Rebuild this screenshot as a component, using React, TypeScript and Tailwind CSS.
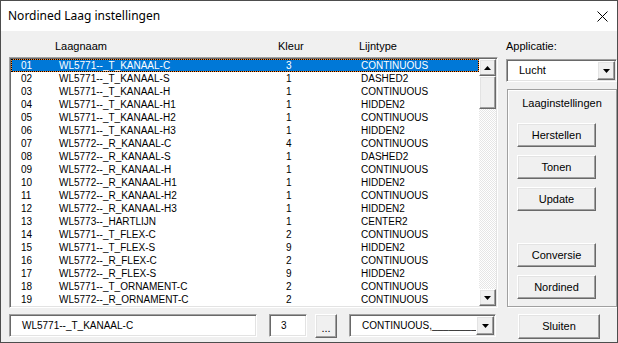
import React from "react";

const rows: [string, string, string, string][] = [
  ["01", "WL5771--_T_KANAAL-C", "3", "CONTINUOUS"],
  ["02", "WL5771--_T_KANAAL-S", "1", "DASHED2"],
  ["03", "WL5771--_T_KANAAL-H", "1", "CONTINUOUS"],
  ["04", "WL5771--_T_KANAAL-H1", "1", "HIDDEN2"],
  ["05", "WL5771--_T_KANAAL-H2", "1", "CONTINUOUS"],
  ["06", "WL5771--_T_KANAAL-H3", "1", "HIDDEN2"],
  ["07", "WL5772--_R_KANAAL-C", "4", "CONTINUOUS"],
  ["08", "WL5772--_R_KANAAL-S", "1", "DASHED2"],
  ["09", "WL5772--_R_KANAAL-H", "1", "CONTINUOUS"],
  ["10", "WL5772--_R_KANAAL-H1", "1", "HIDDEN2"],
  ["11", "WL5772--_R_KANAAL-H2", "1", "CONTINUOUS"],
  ["12", "WL5772--_R_KANAAL-H3", "1", "HIDDEN2"],
  ["13", "WL5773--_HARTLIJN", "1", "CENTER2"],
  ["14", "WL5771--_T_FLEX-C", "2", "CONTINUOUS"],
  ["15", "WL5771--_T_FLEX-S", "9", "HIDDEN2"],
  ["16", "WL5772--_R_FLEX-C", "2", "CONTINUOUS"],
  ["17", "WL5772--_R_FLEX-S", "9", "HIDDEN2"],
  ["18", "WL5771--_T_ORNAMENT-C", "2", "CONTINUOUS"],
  ["19", "WL5772--_R_ORNAMENT-C", "2", "CONTINUOUS"],
];

const raised =
  "bg-[#f0f0f0] border border-t-white border-l-white border-r-[#696969] border-b-[#696969] shadow-[inset_-1px_-1px_0_#a0a0a0,inset_1px_1px_0_#e3e3e3]";
const sunken =
  "border border-t-[#a0a0a0] border-l-[#a0a0a0] border-r-white border-b-white shadow-[inset_1px_1px_0_#696969,inset_-1px_-1px_0_#e3e3e3]";

function Arrow({ up }: { up?: boolean }) {
  return (
    <svg width="7" height="4" viewBox="0 0 7 4">
      {up ? <polygon points="3.5,0 7,4 0,4" fill="#000" /> : <polygon points="0,0 7,0 3.5,4" fill="#000" />}
    </svg>
  );
}

function Button({ label, className }: { label: string; className: string }) {
  return (
    <div className={`${raised} ${className} flex items-center justify-center text-[11px] leading-[13px] text-black`}>
      {label}
    </div>
  );
}

function Combo({ text, className, children }: { text?: string; className: string; children?: React.ReactNode }) {
  return (
    <div className={`${sunken} bg-white ${className} flex items-stretch p-[1px]`}>
      <div className="flex-1 flex items-center pl-[11px] text-black overflow-hidden whitespace-nowrap">
        {children ?? text}
      </div>
      <div className={`${raised} w-[18px] flex items-center justify-center`}>
        <Arrow />
      </div>
    </div>
  );
}

export default function App() {
  return (
    <div className="w-[618px] h-[343px] bg-[#f0f0f0] border border-[#4d4d4d] flex flex-col overflow-hidden font-['Liberation_Sans',Arial,sans-serif] text-[11px] text-black">
      {/* Title bar */}
      <div className="h-[30px] bg-white flex items-center justify-between shrink-0">
        <span className="pl-[7px] text-[12px] font-['Noto_Sans',sans-serif] text-black">Nordined Laag instellingen</span>
        <svg width="11" height="11" viewBox="0 0 11 11" className="mr-[9px]">
          <path d="M0.5 0.5 L10.5 10.5 M10.5 0.5 L0.5 10.5" stroke="#000" strokeWidth="1" />
        </svg>
      </div>

      {/* Body */}
      <div className="flex-1 flex pl-[8px]">
        {/* Left column */}
        <div className="w-[489px] flex flex-col">
          <div className="h-[26px] pt-[9px] leading-[13px] flex text-[11px]">
            <span className="ml-[46px] w-[223px]">Laagnaam</span>
            <span className="w-[81px]">Kleur</span>
            <span>Lijntype</span>
          </div>

          {/* List box */}
          <div className={`${sunken} h-[251px] flex bg-white p-[1px]`}>
            <div className="w-[468px] flex flex-col text-[10px]">
              {rows.map((r, i) => {
                const sel = i === 0;
                return (
                  <div
                    key={r[0]}
                    className={`relative h-[13px] leading-[13px] grid grid-cols-[48px_227px_75px_1fr] whitespace-nowrap ${
                      sel ? "bg-[#0078d7] text-white" : "text-black"
                    }`}
                  >
                    <span className="pl-[10px]">{r[0]}</span>
                    <span>{r[1]}</span>
                    <span>{r[2]}</span>
                    <span>{r[3]}</span>
                    {sel && (
                      <>
                        <div className="absolute inset-0 border border-[#ff8728]" />
                        <div className="absolute inset-0 border border-dotted border-black" />
                      </>
                    )}
                  </div>
                );
              })}
            </div>
            {/* Scrollbar */}
            <div className="w-[17px] flex flex-col bg-[repeating-conic-gradient(#ffffff_0_25%,#e6e6e6_0_50%)] bg-[length:2px_2px]">
              <div className={`${raised} h-[17px] flex items-center justify-center`}>
                <Arrow up />
              </div>
              <div className={`${raised} h-[33px]`} />
              <div className="flex-1" />
              <div className={`${raised} h-[17px] flex items-center justify-center`}>
                <Arrow />
              </div>
            </div>
          </div>

          {/* Bottom row */}
          <div className="mt-[6px] flex items-start text-[10px]">
            <div className={`${sunken} bg-white w-[248px] h-[23px] flex items-center pl-[12px]`}>WL5771--_T_KANAAL-C</div>
            <div className={`${sunken} bg-white ml-[12px] w-[38px] h-[23px] flex items-center pl-[11px]`}>3</div>
            <div className={`${raised} ml-[8px] w-[22px] h-[24px] flex items-end justify-center pb-[5px] text-[11px] leading-[8px]`}>...</div>
            <Combo className="ml-[12px] w-[147px] h-[23px]">
              <span>CONTINUOUS,________</span>
            </Combo>
          </div>
        </div>

        {/* Right column */}
        <div className="ml-[8px] w-[111px] flex flex-col">
          <div className="h-[26px] pt-[9px] leading-[13px]">Applicatie:</div>
          <Combo text="Lucht" className="mt-[2px] h-[23px] w-[111px] text-[11px]" />
          <div className="mt-[7px] ml-[1px] h-[218px] w-[110px] border border-[#a0a0a0] shadow-[inset_1px_1px_0_#ffffff,1px_1px_0_#ffffff] flex flex-col">
            <div className="pt-[7px] leading-[13px] text-center">Laaginstellingen</div>
            <Button label="Herstellen" className="mt-[13px] ml-[9px] w-[79px] h-[24px]" />
            <Button label="Tonen" className="mt-[8px] ml-[9px] w-[79px] h-[24px]" />
            <Button label="Update" className="mt-[8px] ml-[9px] w-[79px] h-[24px]" />
            <Button label="Conversie" className="mt-[32px] ml-[9px] w-[79px] h-[24px]" />
            <Button label="Nordined" className="mt-[8px] ml-[9px] w-[79px] h-[24px]" />
          </div>
          <Button label="Sluiten" className="mt-[7px] ml-[12px] w-[82px] h-[25px]" />
        </div>
      </div>
    </div>
  );
}
